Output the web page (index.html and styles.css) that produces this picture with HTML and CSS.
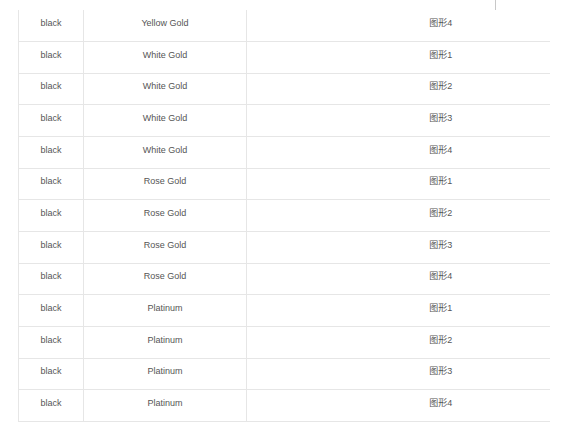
FILE: index.html
```html
<!DOCTYPE html>
<html>
<head>
<meta charset="utf-8">
<link rel="stylesheet" href="styles.css">
</head>
<body>
<div class="wrap">
  <div class="top-strip"><span class="tick"></span></div>
  <div class="clip">
    <table class="grid">
      <colgroup><col class="c1"><col class="c2"><col class="c3"></colgroup>
      <tbody>
        <tr><td>black</td><td>Yellow Gold</td><td>图形4</td></tr>
        <tr><td>black</td><td>White Gold</td><td>图形1</td></tr>
        <tr><td>black</td><td>White Gold</td><td>图形2</td></tr>
        <tr><td>black</td><td>White Gold</td><td>图形3</td></tr>
        <tr><td>black</td><td>White Gold</td><td>图形4</td></tr>
        <tr><td>black</td><td>Rose Gold</td><td>图形1</td></tr>
        <tr><td>black</td><td>Rose Gold</td><td>图形2</td></tr>
        <tr><td>black</td><td>Rose Gold</td><td>图形3</td></tr>
        <tr><td>black</td><td>Rose Gold</td><td>图形4</td></tr>
        <tr><td>black</td><td>Platinum</td><td>图形1</td></tr>
        <tr><td>black</td><td>Platinum</td><td>图形2</td></tr>
        <tr><td>black</td><td>Platinum</td><td>图形3</td></tr>
        <tr><td>black</td><td>Platinum</td><td>图形4</td></tr>
      </tbody>
    </table>
  </div>
</div>
</body>
</html>
```
FILE: styles.css
```css
html, body {
  margin: 0;
  padding: 0;
  background: #ffffff;
}
.wrap {
  padding-left: 18px;
  width: 532px;
}
.top-strip {
  height: 10px;
  display: flex;
  padding-left: 477px;
}
.tick {
  width: 1px;
  height: 10px;
  background: #c8c8c8;
}
.clip {
  width: 532px;
  overflow: hidden;
}
.grid {
  border-collapse: collapse;
  table-layout: fixed;
  width: 616px;
  font-family: "Liberation Sans", Arial, "Noto Sans CJK SC", sans-serif;
  font-size: 9px;
  color: #555555;
}
.c1 { width: 65px; }
.c2 { width: 163px; }
.c3 { width: 388px; }
.grid tr { height: 31.67px; }
.grid td {
  padding: 6.5px 0 0 0;
  line-height: 13px;
  vertical-align: top;
  text-align: center;
  border-right: 1px solid #e6e6e6;
  border-bottom: 1px solid #e6e6e6;
}
.grid td:first-child { border-left: 1px solid #e6e6e6; }
.grid td:last-child { border-right: none; }
```
